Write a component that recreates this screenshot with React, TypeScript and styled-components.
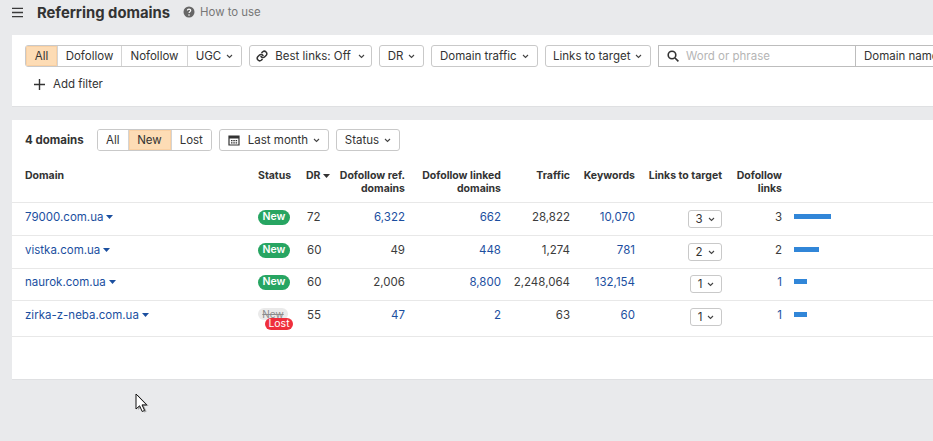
import React from "react";
import styled, { createGlobalStyle } from "styled-components";

const Global = createGlobalStyle`
  html, body { margin: 0; padding: 0; background: #e9eaec; height: 441px; overflow: hidden; }
  body { font-family: Inter, "Liberation Sans", sans-serif; font-size: 11.5px; color: #333; }
  * { box-sizing: border-box; }
`;
const Page = styled.div`position: relative; width: 933px; height: 441px; overflow: hidden; display: flex; flex-direction: column;`;
const Header = styled.header`height: 35px; display: flex; align-items: flex-start; padding: 5px 0 0 12px; flex: none;`;
const Burger = styled.svg`width: 11px; height: 11px; margin-top: 2px; color: #3a3a3a;`;
const Title = styled.h1`margin: 0 0 0 14px; font-size: 14.8px; line-height: 16px; font-weight: 700; color: #333;`;
const Help = styled.span`display: flex; align-items: center; gap: 5px; margin-left: 13px; color: #777; font-size: 11.4px; line-height: 14px;`;
const Panel = styled.section`background: #fff; margin-left: 12px; border-bottom: 1px solid #dfe0e2;`;
const FilterPanel = styled(Panel)`height: 72px; padding: 10px 0 0 13px; overflow: hidden;`;
const Bar = styled.div`display: flex; align-items: center; gap: 7px; white-space: nowrap;`;
const Segments = styled.div`display: flex; height: 22px; flex: none; border: 1px solid #c9c9c9; border-radius: 3px; overflow: hidden;`;
const Segment = styled.div<{ $w: number; $on?: boolean }>`
  width: ${p => p.$w}px; display: flex; align-items: center; justify-content: center; gap: 5px;
  background: ${p => (p.$on ? "#fddcb5" : "#fff")};
  box-shadow: ${p => (p.$on ? "inset 0 0 0 1px #f9d0a3" : "none")};
  & + & { border-left: 1px solid ${p => (p.$on ? "#f3d1aa" : "#d4d4d4")}; }
`;
const Btn = styled.div<{ $w: number }>`
  width: ${p => p.$w}px; height: 22px; flex: none; display: flex; align-items: center; justify-content: center; gap: 5px;
  border: 1px solid #c9c9c9; border-radius: 3px; background: #fff;
`;
const LinkBtn = styled(Btn)`gap: 7px;`;
const SearchGroup = styled.div`display: flex; flex: none;`;
const Search = styled.div`width: 197px; height: 22px; flex: none; display: flex; align-items: center; gap: 7px; padding-left: 8px; border: 1px solid #bdbdbd; border-right: none; color: #b5b5b5;`;
const Select = styled.div`width: 120px; height: 22px; flex: none; display: flex; align-items: center; padding-left: 8px; border: 1px solid #bdbdbd; border-right: none;`;
const AddFilter = styled.div`display: flex; align-items: center; gap: 8px; margin: 9px 0 0 9px; height: 16px;`;
const TablePanel = styled(Panel)`margin-top: 13px; height: 260px;`;
const Toolbar = styled.div`display: flex; align-items: center; padding: 9px 0 0 13px; gap: 7px; height: 31px;`;
const Count = styled.strong`font-weight: 700; margin-right: 7px; width: 58px; white-space: nowrap;`;
const columns = "233px 48px 30px 69px 96px 69px 65px 87px 60px 1fr";
const Row = styled.div<{ $h: number; $top: number }>`
  display: grid; height: ${p => p.$h}px; padding: ${p => p.$top}px 0 0 13px; align-items: start; line-height: 16px;
  grid-template-columns: ${columns};
  border-bottom: 1px solid #e8e8e8;
`;
const HeadRow = styled(Row)`margin-top: 9px; font-weight: 700; font-size: 10.5px; line-height: 13px; color: #333;`;
const Right = styled.div`text-align: right;`;
const DrHead = styled.div`display: flex; align-items: center; gap: 3px; height: 13px;`;
const DomainCell = styled.div`display: flex; align-items: center; gap: 3px; color: #1b4f9f;`;
const Num = styled.div`text-align: right; color: #3c3c3c;`;
const LinkNum = styled(Num)`color: #1c4f9f;`;
const DrCell = styled.div`padding-left: 1px; color: #3c3c3c;`;
const BadgeCell = styled.div`display: flex; height: 16px; align-items: center;`;
const Badge = styled.span`display: inline-flex; align-items: center; justify-content: center; width: 32px; height: 15px; border-radius: 8px; background: #27a562; color: #fff; font-size: 10.5px; font-weight: 600;`;
const StatusStack = styled.div`position: relative; height: 24px; width: 40px;`;
const OldBadge = styled.span`position: absolute; left: 0; top: 1px; width: 30px; height: 12px; border-radius: 6px; background: #eaeaea; color: #8c8c8c; font-size: 10px; line-height: 12px; text-align: center; text-decoration: line-through;`;
const LostBadge = styled.span`position: absolute; left: 7px; top: 11px; width: 28px; height: 12px; border-radius: 6px; background: #ef2f3c; color: #fff; font-size: 10.5px; line-height: 12px; text-align: center;`;
const CountCellWrap = styled.div`display: flex; justify-content: flex-end; margin-top: 1px;`;
const CountBtn = styled.div<{ $w: number }>`width: ${p => p.$w}px; height: 18px; display: flex; align-items: center; justify-content: center; gap: 5px; border: 1px solid #c9c9c9; border-radius: 3px;`;
const BarCell = styled.div`padding: 5px 0 0 12px; display: flex;`;
const Meter = styled.div`height: 5px; background: #3186d8;`;
const CalendarLabel = styled.span`margin-left: 3px;`;
const Cursor = styled.svg`position: absolute; left: 135px; top: 393px; width: 15px; height: 21px;`;

const Chevron = () => (
  <svg width="7" height="5" viewBox="0 0 7 5" fill="none" stroke="#444" strokeWidth="1.1"><path d="M1 1l2.5 2.5L6 1" /></svg>
);
const Caret = () => (
  <svg width="7" height="4" viewBox="0 0 7 4" fill="#1b4f9f"><path d="M0 0h7L3.5 4z" /></svg>
);

const rows = [
  { d: "79000.com.ua", dr: 72, ref: "6,322", refL: true, linked: "662", tr: "28,822", kw: "10,070", lt: 3, df: "3", dfL: false, bar: 37, h: 33, top: 6 },
  { d: "vistka.com.ua", dr: 60, ref: "49", refL: false, linked: "448", tr: "1,274", kw: "781", lt: 2, df: "2", dfL: false, bar: 25, h: 33, top: 6 },
  { d: "naurok.com.ua", dr: 60, ref: "2,006", refL: false, linked: "8,800", tr: "2,248,064", kw: "132,154", lt: 1, df: "1", dfL: true, bar: 13, h: 32, top: 5 },
  { d: "zirka-z-neba.com.ua", dr: 55, ref: "47", refL: true, linked: "2", tr: "63", kw: "60", lt: 1, df: "1", dfL: true, bar: 13, h: 36, top: 6 },
];

export default function App() {
  return (
    <Page>
      <Global />
      <Header>
        <Burger viewBox="0 0 12 12" fill="none" stroke="currentColor" strokeWidth="1.6"><path d="M0 1.5h12M0 6h12M0 10.5h12" /></Burger>
        <Title>Referring domains</Title>
        <Help>
          <svg width="12" height="12" viewBox="0 0 12 12"><circle cx="6" cy="6" r="5.5" fill="#666" /><path d="M4.4 4.6c0-2 3.3-2 3.3-.1 0 1.2-1.7 1.2-1.7 2.6" fill="none" stroke="#fff" strokeWidth="1.2" /><circle cx="6" cy="9" r=".8" fill="#fff" /></svg>
          How to use
        </Help>
      </Header>
      <FilterPanel>
        <Bar>
          <Segments>
            <Segment $w={31} $on>All</Segment>
            <Segment $w={64}>Dofollow</Segment>
            <Segment $w={66}>Nofollow</Segment>
            <Segment $w={54}>UGC <Chevron /></Segment>
          </Segments>
          <LinkBtn $w={123}>
            <svg width="12" height="12" viewBox="0 0 24 24" fill="none" stroke="#333" strokeWidth="3" strokeLinecap="round"><path d="M10 13a5 5 0 0 0 7.5.5l3-3a5 5 0 0 0-7-7l-1.7 1.7" /><path d="M14 11a5 5 0 0 0-7.5-.5l-3 3a5 5 0 0 0 7 7l1.7-1.7" /></svg>
            Best links: Off <Chevron />
          </LinkBtn>
          <Btn $w={45}>DR <Chevron /></Btn>
          <Btn $w={106.5}>Domain traffic <Chevron /></Btn>
          <Btn $w={106.5}>Links to target <Chevron /></Btn>
          <SearchGroup>
            <Search>
              <svg width="12" height="12" viewBox="0 0 12 12" fill="none" stroke="#333" strokeWidth="1.6"><circle cx="5" cy="5" r="3.8" /><path d="M8 8l3.4 3.4" /></svg>
              Word or phrase
            </Search>
            <Select>Domain name</Select>
          </SearchGroup>
        </Bar>
        <AddFilter>
          <svg width="11" height="11" viewBox="0 0 11 11" stroke="#333" strokeWidth="1.4"><path d="M5.5 0v11M0 5.5h11" /></svg>
          Add filter
        </AddFilter>
      </FilterPanel>
      <TablePanel>
        <Toolbar>
          <Count>4 domains</Count>
          <Segments>
            <Segment $w={29.5}>All</Segment>
            <Segment $w={43} $on>New</Segment>
            <Segment $w={40.5}>Lost</Segment>
          </Segments>
          <Btn $w={110}>
            <svg width="12" height="12" viewBox="0 0 12 12"><path d="M1 2h10v9H1z" fill="none" stroke="#333" strokeWidth="1.2" /><path d="M1 2h10v2.5H1z" fill="#333" /><path d="M3 6h1.5v1.2H3zM5.3 6h1.5v1.2H5.3zM7.6 6h1.5v1.2H7.6zM3 8.2h1.5v1.2H3zM5.3 8.2h1.5v1.2H5.3zM7.6 8.2h1.5v1.2H7.6z" fill="#333" /></svg>
            <CalendarLabel>Last month</CalendarLabel> <Chevron />
          </Btn>
          <Btn $w={64}>Status <Chevron /></Btn>
        </Toolbar>
        <HeadRow $h={43} $top={9}>
          <div>Domain</div>
          <div>Status</div>
          <DrHead>DR <svg width="7" height="4" viewBox="0 0 7 4" fill="#333"><path d="M0 0h7L3.5 4z" /></svg></DrHead>
          <Right>Dofollow ref. domains</Right>
          <Right>Dofollow linked domains</Right>
          <Right>Traffic</Right>
          <Right>Keywords</Right>
          <Right>Links to target</Right>
          <Right>Dofollow links</Right>
          <div />
        </HeadRow>
        {rows.map(r => (
          <Row key={r.d} $h={r.h} $top={r.top}>
            <DomainCell>{r.d} <Caret /></DomainCell>
            {r.d.startsWith("zirka") ? (
              <StatusStack><OldBadge>New</OldBadge><LostBadge>Lost</LostBadge></StatusStack>
            ) : (
              <BadgeCell><Badge>New</Badge></BadgeCell>
            )}
            <DrCell>{r.dr}</DrCell>
            {r.refL ? <LinkNum>{r.ref}</LinkNum> : <Num>{r.ref}</Num>}
            <LinkNum>{r.linked}</LinkNum>
            <Num>{r.tr}</Num>
            <LinkNum>{r.kw}</LinkNum>
            <CountCellWrap><CountBtn $w={r.lt === 1 ? 32 : 34}>{r.lt} <Chevron /></CountBtn></CountCellWrap>
            {r.dfL ? <LinkNum>{r.df}</LinkNum> : <Num>{r.df}</Num>}
            <BarCell><Meter style={{ width: r.bar }} /></BarCell>
          </Row>
        ))}
      </TablePanel>
      <Cursor viewBox="0 0 15 21">
        <path d="M1.5 1v15l3.6-3.2 2.6 5.7 2.4-1.1-2.6-5.5h4.7z" fill="#6d6d6d" opacity=".55" transform="translate(1.5 1)" />
        <path d="M1 1v15l3.6-3.2 2.6 5.7 2.4-1.1-2.6-5.5h4.7z" fill="#fff" stroke="#111" strokeWidth="1" />
      </Cursor>
    </Page>
  );
}
